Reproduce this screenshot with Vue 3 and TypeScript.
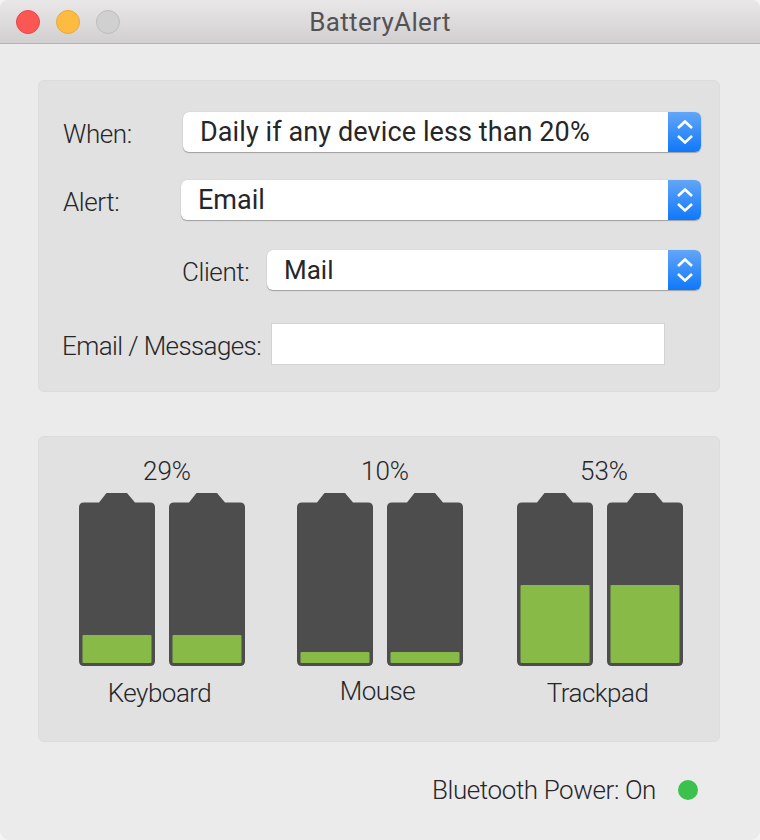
<script setup lang="ts">
const selects = [
  { label: 'When:', value: 'Daily if any device less than 20%', kind: 'when' },
  { label: 'Alert:', value: 'Email', kind: 'alert' },
  { label: 'Client:', value: 'Mail', kind: 'client' },
]

// fill heights are read off the screenshot, they don't scale with the percent
const devices = [
  { name: 'Keyboard', percent: 29, fill: 28, kind: 'keyboard' },
  { name: 'Mouse', percent: 10, fill: 11, kind: 'mouse' },
  { name: 'Trackpad', percent: 53, fill: 78, kind: 'trackpad' },
]

const batteryBody =
  'M5 10.5H20L27.5 1H48L56 10.5H71Q76 10.5 76 15.5V169Q76 174 71 174H5Q0 174 0 169V15.5Q0 10.5 5 10.5Z'
</script>

<template>
  <div class="window">
    <header class="titlebar">
      <div class="lights">
        <span class="light red"></span>
        <span class="light yellow"></span>
        <span class="light grey"></span>
      </div>
      <div class="title">BatteryAlert</div>
    </header>

    <section class="panel settings">
      <div v-for="s in selects" :key="s.kind" class="row" :class="s.kind">
        <label class="label">{{ s.label }}</label>
        <div class="select">
          <span class="select-text">{{ s.value }}</span>
          <span class="stepper">
            <svg width="24" height="30" viewBox="0 0 24 30" fill="none" stroke="#fff" stroke-width="2.6">
              <path d="M5 11L12 4.5L19 11" />
              <path d="M5 19L12 25.5L19 19" />
            </svg>
          </span>
        </div>
      </div>
      <div class="row email">
        <label class="label">Email / Messages:</label>
        <input class="text-input" type="text" />
      </div>
    </section>

    <section class="panel batteries">
      <div v-for="d in devices" :key="d.kind" class="device" :class="d.kind">
        <div class="percent">{{ d.percent }}%</div>
        <div class="cells">
          <svg v-for="n in 2" :key="n" width="76" height="174" viewBox="0 0 76 174">
            <path :d="batteryBody" fill="#4d4d4d" />
            <rect x="3.5" :y="171 - d.fill" width="69" :height="d.fill" rx="1" fill="#88ba48" />
          </svg>
        </div>
        <div class="device-name">{{ d.name }}</div>
      </div>
    </section>

    <footer class="status">
      <span>Bluetooth Power: On</span>
      <span class="dot"></span>
    </footer>
  </div>
</template>

<style>
html,
body {
  margin: 0;
  background: #f4f4f4;
}
</style>

<style scoped>
.window {
  position: relative;
  width: 760px;
  height: 840px;
  box-sizing: border-box;
  background: #ebebeb;
  border-radius: 8px 8px 10px 10px;
  overflow: hidden;
  font-family: Roboto, 'Liberation Sans', Arial, sans-serif;
  font-weight: 300;
  color: #26262a;
}

.titlebar {
  display: flex;
  align-items: center;
  justify-content: center;
  position: relative;
  height: 44px;
  box-sizing: border-box;
  background: linear-gradient(#e9e7e8, #d1cfd0);
  border-bottom: 1px solid #b4b3b3;
}

.lights {
  position: absolute;
  left: 16px;
  top: 10px;
  display: flex;
  gap: 16px;
}

.light {
  width: 24px;
  height: 24px;
  box-sizing: border-box;
  border-radius: 50%;
  border: 1px solid transparent;
}

.red {
  background: #fc5753;
  border-color: #e5484a;
}

.yellow {
  background: #fdbc40;
  border-color: #e9a93a;
}

.grey {
  background: #d0d0d0;
  border-color: #bdbdbd;
}

.title {
  font-size: 26px;
  font-weight: 400;
  color: #555254;
  letter-spacing: 0.35px;
}

.panel {
  margin: 0 40px 0 38px;
  box-sizing: border-box;
  background: #e1e1e1;
  border: 1px solid #dcdcdc;
  border-radius: 6px;
}

.settings {
  height: 312px;
  margin-top: 36px;
  padding: 31px 18px 0 23px;
}

.row {
  display: flex;
  align-items: center;
}

.alert {
  margin-top: 28px;
}

.client {
  margin-top: 30px;
}

.email {
  margin-top: 33px;
  padding-right: 36px;
}

.label {
  flex: none;
  font-size: 26px;
  letter-spacing: -0.4px;
  box-sizing: border-box;
  margin-top: 4px;
}

.when .label {
  width: 121px;
  padding-left: 1px;
}

.alert .label {
  width: 119px;
  padding-left: 1px;
}

.client .label {
  width: 205px;
  padding-left: 120px;
}

.email .label {
  width: 209px;
  letter-spacing: -0.6px;
}

.select {
  flex: 1;
  display: flex;
  height: 40px;
  box-sizing: border-box;
  background: #fff;
  border-radius: 6px;
  box-shadow: 0 1px 1px rgba(0, 0, 0, 0.28), 0 0 1px rgba(0, 0, 0, 0.2);
  overflow: hidden;
}

.select-text {
  flex: 1;
  padding-left: 17px;
  font-size: 26px;
  font-weight: 400;
  line-height: 40px;
}

.when .select-text {
  font-size: 27px;
  letter-spacing: 0.1px;
}

.alert .select-text {
  font-size: 27px;
}

.stepper {
  flex: none;
  width: 33px;
  display: flex;
  align-items: center;
  justify-content: center;
  background: linear-gradient(#62a6f7, #0f78fb);
}

.text-input {
  flex: 1;
  min-width: 0;
  height: 42px;
  box-sizing: border-box;
  background: #fff;
  border: 1px solid #d2d2d2;
  border-radius: 0;
  outline: none;
}

.batteries {
  height: 306px;
  margin-top: 44px;
  padding: 0 0 0 40px;
  display: flex;
}

.device {
  width: 166px;
  margin-right: 52px;
  text-align: center;
}

.trackpad {
  margin-left: 2px;
}

.percent {
  margin: 20px 0 0 10px;
  font-size: 26px;
  line-height: 29px;
  letter-spacing: 0;
}

.trackpad .percent {
  margin-left: 8px;
}

.cells {
  display: flex;
  gap: 14px;
  margin-top: 6px;
}

.device-name {
  margin-top: 12px;
  padding-right: 5px;
  font-size: 26px;
  line-height: 30px;
  letter-spacing: -0.5px;
}

.mouse .device-name {
  margin-top: 10px;
}

.status {
  display: flex;
  justify-content: flex-end;
  align-items: center;
  gap: 22px;
  margin-top: 33px;
  padding-right: 62px;
  font-size: 26px;
  line-height: 30px;
  letter-spacing: -0.4px;
}

.dot {
  width: 20px;
  height: 20px;
  border-radius: 50%;
  background: #3cc14d;
}
</style>
